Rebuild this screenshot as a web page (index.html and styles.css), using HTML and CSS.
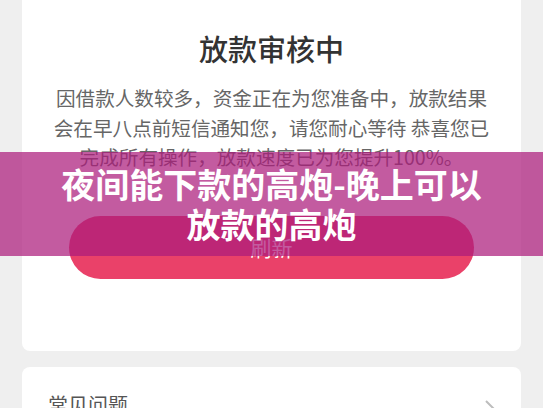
FILE: index.html
```html
<!DOCTYPE html>
<html lang="zh-CN">
<head>
    <meta charset="UTF-8">
    <meta name="viewport" content="width=device-width, initial-scale=1.0">
    <title>放款审核中</title>
    <link rel="stylesheet" href="styles.css">
</head>
<body>
    <div class="page">
        <div class="status-card">
            <div class="status-icon"></div>
            <h1 class="status-title">放款审核中</h1>
            <p class="status-text">因借款人数较多，资金正在为您准备中，放款结果会在早八点前短信通知您，请您耐心等待 恭喜您已完成所有操作，放款速度已为您提升100%。</p>
            <button class="refresh-btn">刷新</button>
        </div>

        <div class="faq-card">
            <span>常见问题</span>
            <svg class="chevron" width="12" height="20" viewBox="0 0 12 20">
                <path d="M2 2 L10 10 L2 18" fill="none" stroke="#bdbdbd" stroke-width="2"/>
            </svg>
        </div>
    </div>

    <!-- 标题横幅 -->
    <div class="banner">
        <h2>夜间能下款的高炮-晚上可以放款的高炮</h2>
    </div>
</body>
</html>
```

FILE: styles.css
```css
* {
    margin: 0;
    padding: 0;
    box-sizing: border-box;
}

body {
    font-family: "Noto Sans CJK SC", "Noto Sans", sans-serif;
    background: #efefef;
    height: 100vh;
    overflow: hidden;
    position: relative;
}

.page {
    padding: 0 22px;
}

.status-card {
    background: #ffffff;
    border-radius: 8px;
    margin-top: -60px;
    padding: 0 29px 72px;
    display: flex;
    flex-direction: column;
    align-items: center;
}

/* 顶部图标 (只露出底边) */
.status-icon {
    width: 30px;
    height: 60px;
    margin-left: 26px;
    border-radius: 0 0 14px 14px;
    background: linear-gradient(180deg, #ffffff 85%, #fbf6dc 100%);
}

.status-title {
    font-size: 29px;
    font-weight: 500;
    color: #333333;
    line-height: 40px;
    margin-top: 28px;
}

.status-text {
    font-size: 19.6px;
    line-height: 29.5px;
    color: #666666;
    text-align: center;
    margin-top: 15px;
    width: 100%;
}

.refresh-btn {
    width: 405px;
    height: 63px;
    margin-top: 44px;
    border: none;
    border-radius: 32px;
    background: #ea4169;
    color: #ffffff;
    font-family: inherit;
    font-size: 21px;
}

.faq-card {
    background: #ffffff;
    border-radius: 8px;
    margin-top: 16px;
    padding: 24px 25px 24px 26px;
    display: flex;
    align-items: center;
    justify-content: space-between;
    font-size: 20px;
    line-height: 28px;
    color: #555555;
}

.chevron {
    margin-top: 8px;
}

/* 横幅 */
.banner {
    position: absolute;
    top: 152px;
    left: 0;
    right: 0;
    height: 104px;
    background: rgba(172, 28, 124, 0.72);
    display: flex;
    align-items: center;
    justify-content: center;
    padding: 0 52px;
}

.banner h2 {
    font-size: 34px;
    font-weight: 700;
    line-height: 40px;
    color: #ffffff;
    text-align: center;
}
```
